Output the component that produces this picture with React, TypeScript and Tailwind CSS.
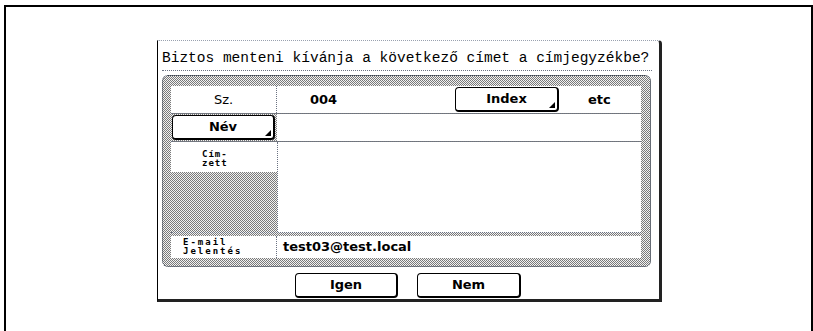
import React from "react";

const hatch =
  "bg-[image:repeating-conic-gradient(#7a7a7a_0%_25%,#f2f2f2_0%_50%)] bg-size-[2px_2px]";

const Corner: React.FC = () => (
  <span className="absolute right-[2px] bottom-[2px] w-0 h-0 border-l-[6px] border-l-transparent border-b-[6px] border-b-black" />
);

const Btn: React.FC<{ label: string; w: string; corner?: boolean }> = ({ label, w, corner }) => (
  <div
    className={`relative ${w} h-[25px] flex items-center justify-center bg-white border border-black border-r-2 border-b-2 rounded-[4px] text-[13px] font-bold text-black`}
  >
    {label}
    {corner && <Corner />}
  </div>
);

const App: React.FC = () => {
  return (
    <div className="w-[813px] h-[331px] bg-white pt-[5px] pl-[4px] overflow-hidden font-['DejaVu_Sans',sans-serif] text-black">
      <div className="h-[326px] border-2 border-b-0 border-black pl-[151px] pt-[33px]">
        {/* dialog */}
        <div className="w-[505px] h-[262px] flex flex-col border-l border-r-[3px] border-b-[3px] border-t border-l-black border-r-[#222] border-b-[#222] border-t-gray-400 [border-top-style:dotted] rounded-tr-[4px]">
          <div className="pl-[4px] pt-[8px] leading-[18px] text-[14.5px] font-['Liberation_Mono',monospace] whitespace-nowrap">
            Biztos menteni kívánja a következő címet a címjegyzékbe?
          </div>
          <div className="ml-[4px] mt-[3px] w-[490px] h-0 border-t border-dotted border-gray-500" />

          {/* panel */}
          <div className={`ml-[4px] mt-[4px] w-[489px] h-[192px] rounded-[6px] border border-dotted border-gray-700 pl-[8px] pr-[9px] pt-[10px] ${hatch}`}>
            {/* Sz. row */}
            <div className="flex h-[28px] border-b border-dotted border-gray-500">
              <div className="w-[106px] bg-white flex items-center justify-center border-r border-dotted border-gray-500 text-[13px]">
                Sz.
              </div>
              <div className="flex-1 bg-white flex items-center text-[13px] font-bold">
                <span className="ml-[33px] w-[145px]">004</span>
                <Btn label="Index" w="w-[104px]" corner />
                <span className="ml-[29px]">etc</span>
              </div>
            </div>

            {/* Név row */}
            <div className="flex h-[28px] border-b border-dotted border-gray-500">
              <div className="w-[106px] flex items-center pl-[1px]">
                <Btn label="Név" w="w-[103px]" corner />
              </div>
              <div className="flex-1 bg-white" />
            </div>

            {/* Címzett row */}
            <div className="flex h-[91px] border-b border-dotted border-gray-500">
              <div className="w-[106px] flex flex-col">
                <div className="h-[30px] bg-white pl-[31px] pt-[8px] text-[9px] leading-[9px] font-bold font-['DejaVu_Sans_Mono',monospace] tracking-[1px]">
                  <div>Cím-</div>
                  <div>zett</div>
                </div>
              </div>
              <div className="flex-1 bg-white border-l border-dotted border-gray-500" />
            </div>

            {/* E-mail row */}
            <div className="flex h-[22px] mt-[3px]">
              <div className="w-[106px] bg-white border-r border-dotted border-gray-500 pl-[12px] pt-[2px] text-[9px] leading-[9px] font-bold font-['DejaVu_Sans_Mono',monospace] tracking-[2px]">
                <div>E-mail</div>
                <div>Jelentés</div>
              </div>
              <div className="flex-1 bg-white flex items-center pl-[6px] text-[13px] font-bold">
                test03@test.local
              </div>
            </div>
          </div>

          {/* buttons */}
          <div className="flex mt-[6px] ml-[137px] gap-[19px]">
            <Btn label="Igen" w="w-[103px]" />
            <Btn label="Nem" w="w-[104px]" />
          </div>
        </div>
      </div>
    </div>
  );
};

export default App;
